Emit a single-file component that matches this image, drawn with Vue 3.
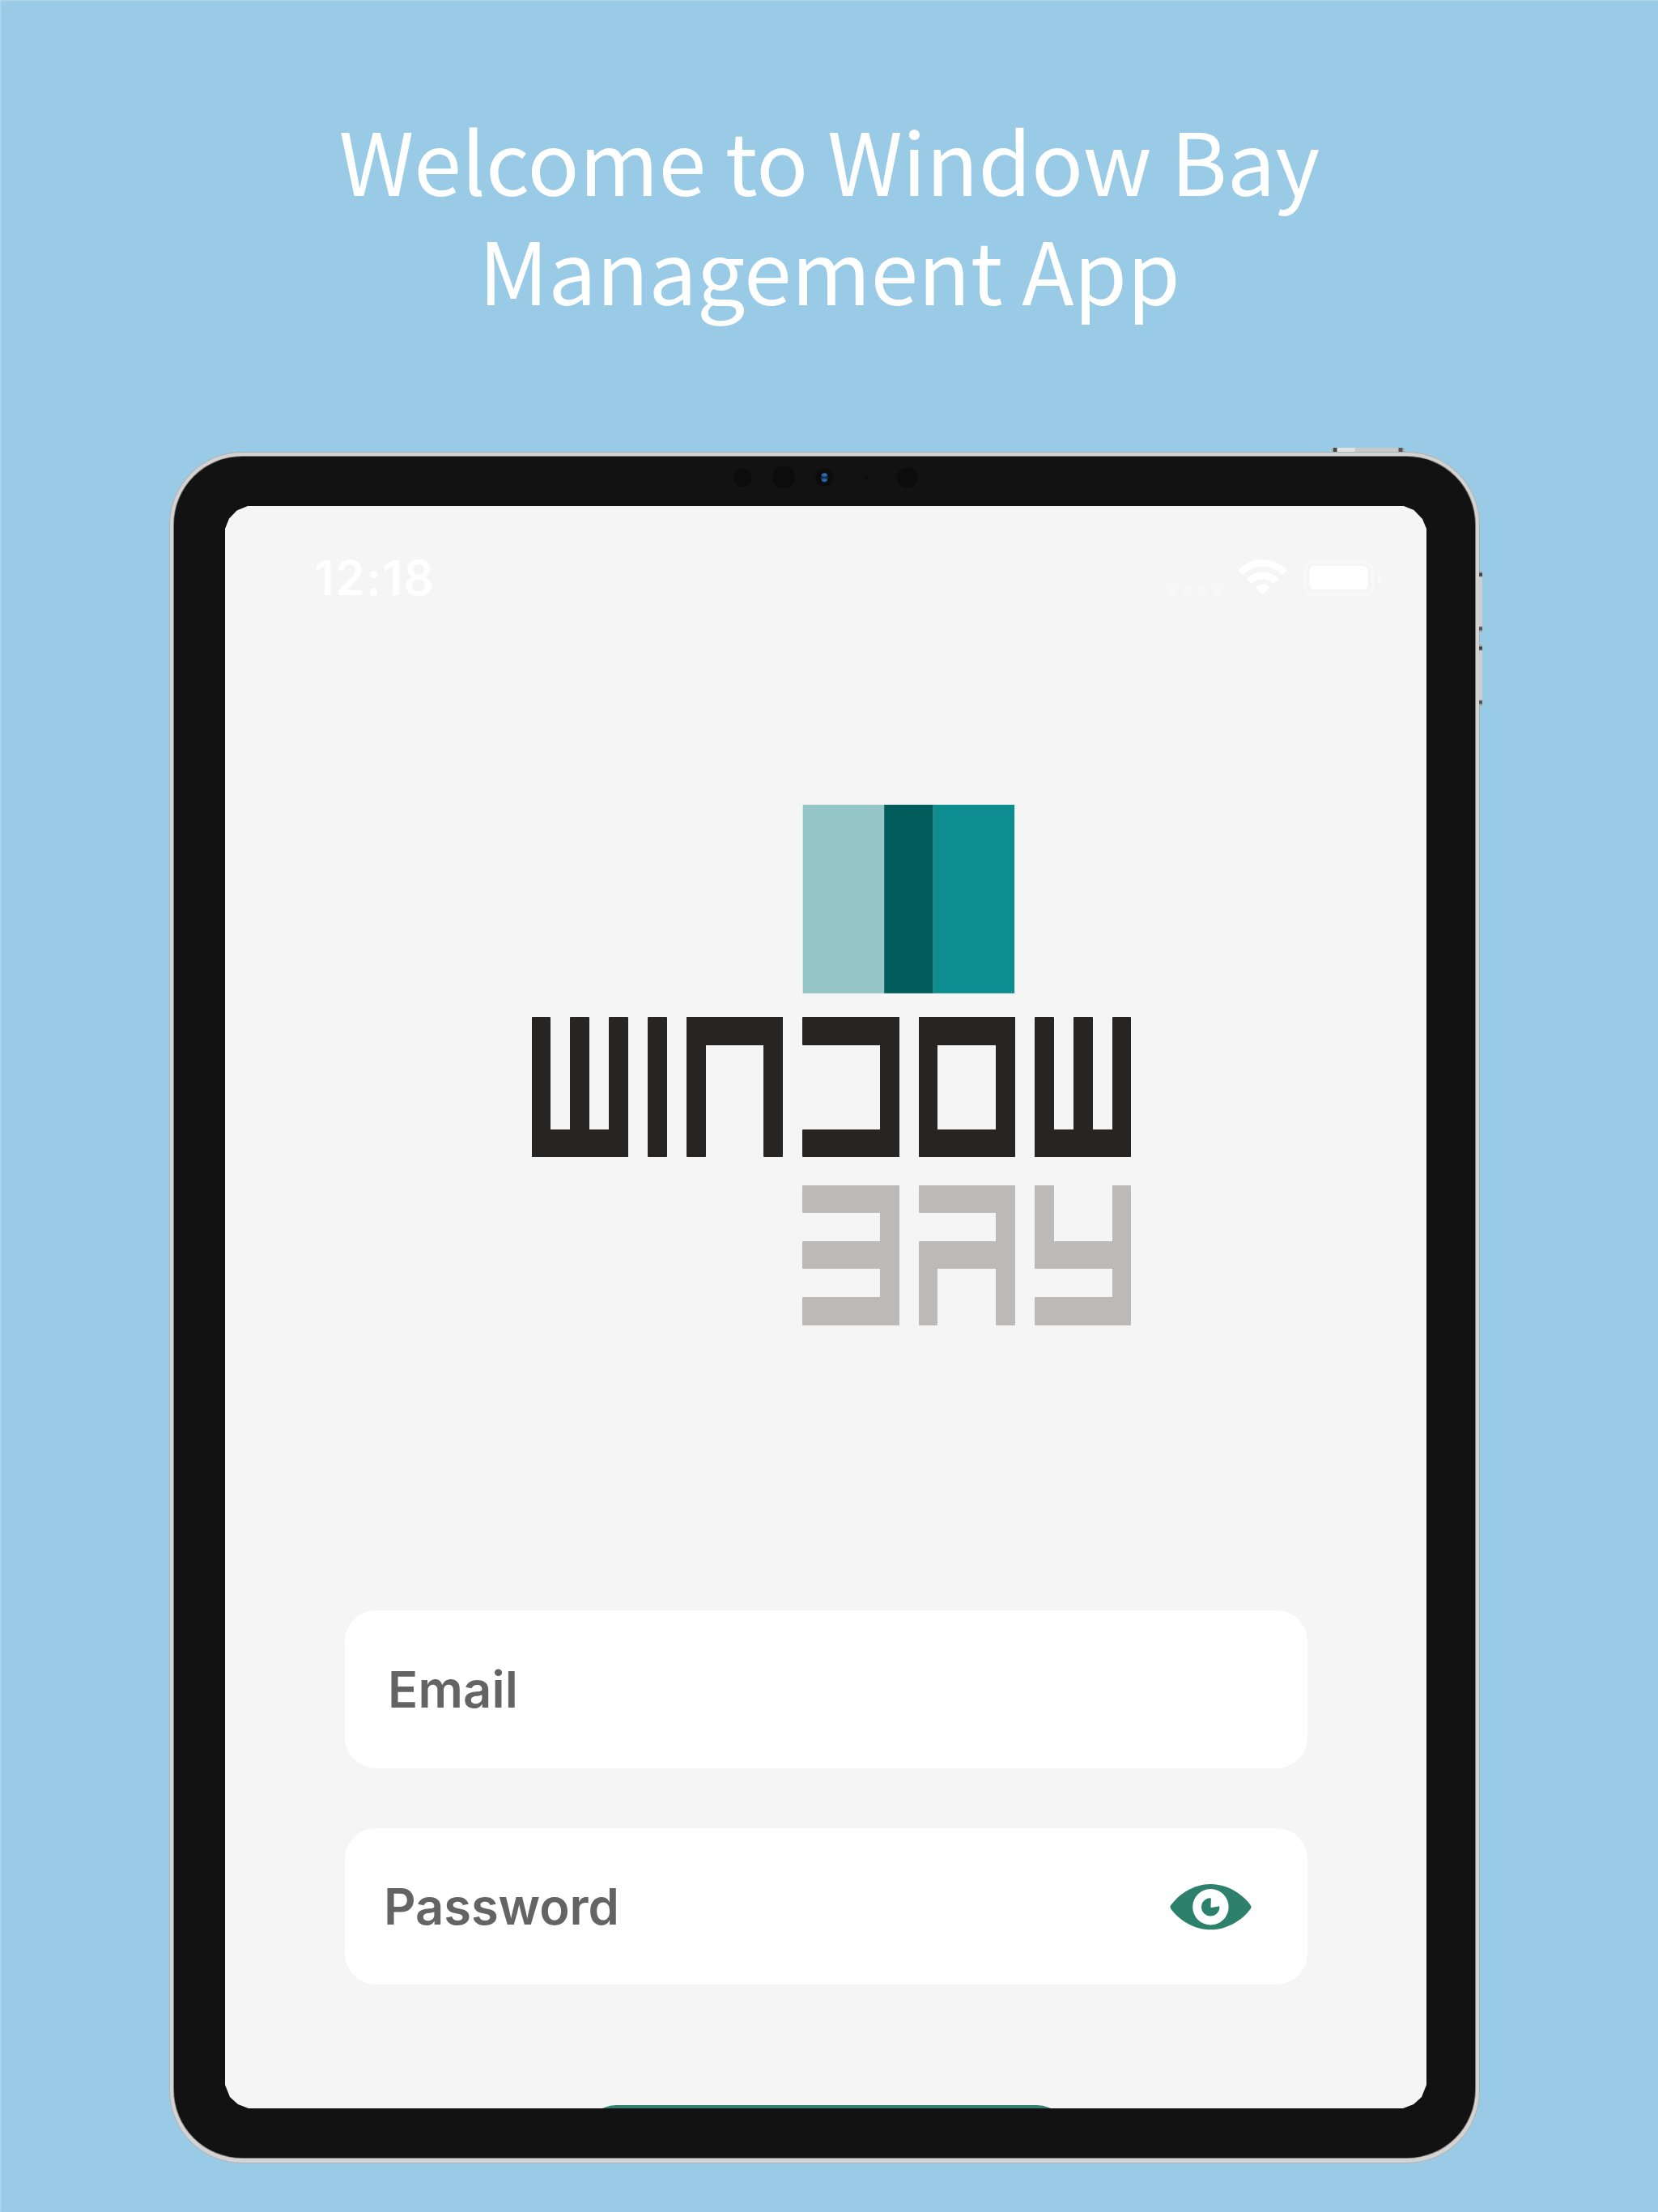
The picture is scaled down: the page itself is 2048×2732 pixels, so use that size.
<script setup>
const sensors = [
  { x: 917.3, y: 590, r: 11 },
  { x: 968, y: 589.3, r: 14 },
  { x: 1018.3, y: 589.7, r: 11 },
  { x: 1070, y: 590, r: 3 },
  { x: 1120.7, y: 589.7, r: 12.7 },
]

// Wordmark bars on a 31 x 5 grid: [column, row, columns, rows]
const windowBars = [
  [0, 0, 1, 5], [2, 0, 1, 5], [4, 0, 1, 5], [0, 4, 5, 1],
  [6, 0, 1, 5],
  [8, 0, 1, 5], [12, 0, 1, 5], [8, 0, 5, 1],
  [14, 0, 5, 1], [14, 4, 5, 1], [18, 0, 1, 5],
  [20, 0, 5, 1], [20, 4, 5, 1], [20, 0, 1, 5], [24, 0, 1, 5],
  [26, 0, 1, 5], [28, 0, 1, 5], [30, 0, 1, 5], [26, 4, 5, 1],
]
const bayBars = [
  [14, 0, 5, 1], [14, 2, 5, 1], [14, 4, 5, 1], [18, 0, 1, 5],
  [20, 0, 5, 1], [20, 2, 5, 1], [20, 2, 1, 3], [24, 0, 1, 5],
  [26, 0, 1, 3], [26, 2, 5, 1], [26, 4, 5, 1], [30, 0, 1, 5],
]
const COL = 23.9
const ROW = 34.55

// Edges are rounded to whole pixels so that overlapping bars share them
const place = (bars, top) =>
  bars.map(([c, r, w, h]) => {
    const x = Math.round(656.5 + c * COL)
    const y = Math.round(top + r * ROW)
    return {
      x,
      y,
      width: Math.round(656.5 + (c + w) * COL) - x,
      height: Math.round(top + (r + h) * ROW) - y,
      rx: 1,
    }
  })
const windowRects = place(windowBars, 1256.3)
const bayRects = place(bayBars, 1463.8)
</script>

<template>
  <main class="page">
    <h1 class="title">Welcome to Window Bay<br />Management App</h1>
    <section class="tablet">
      <span class="key key-top"></span>
      <span class="key key-up"></span>
      <span class="key key-down"></span>
      <div class="bezel">
        <svg class="sensors" width="320" height="40" viewBox="860 570 320 40">
          <circle v-for="s in sensors" :key="s.x" :cx="s.x" :cy="s.y" :r="s.r" fill="#0c0c0c" />
          <ellipse cx="1018.3" cy="589.7" rx="4.5" ry="6" fill="#102f55" />
          <ellipse cx="1018.3" cy="586.6" rx="3.4" ry="2" fill="#2d6cab" />
          <ellipse cx="1018.3" cy="593" rx="3.4" ry="2" fill="#29629e" />
        </svg>
        <div class="screen">
          <header class="status">
            <span class="time">12:18</span>
            <svg width="270" height="50" viewBox="1438 689 270 50">
              <g fill="#f7f7f7">
                <circle cx="1448" cy="728.7" r="6.5" />
                <circle cx="1466.7" cy="728.7" r="6.5" />
                <circle cx="1485.2" cy="728.7" r="6.5" />
                <circle cx="1503.8" cy="728.7" r="6.5" />
              </g>
              <path fill="#fff" d="M1529.8 703.4Q1542.5 691 1559.5 691T1589.2 703.4Q1590 704.2 1589.2 705L1585 709.2Q1584.2 710 1583.3 709.2Q1572.8 700 1559.5 700T1535.7 709.2Q1534.8 710 1534 709.2L1529.8 705Q1529 704.2 1529.8 703.4Z" />
              <path fill="#fff" d="M1540.6 714.2Q1548.7 706.2 1559.5 706.2T1578.4 714.2Q1579.2 715 1578.4 715.8L1574 720.2Q1573.2 721 1572.3 720.2Q1566.7 715.4 1559.5 715.4T1546.7 720.2Q1545.8 721 1545 720.2L1540.6 715.8Q1539.8 715 1540.6 714.2Z" />
              <path fill="#fff" d="M1551.4 725Q1554.9 721.6 1559.5 721.6T1567.6 725Q1568.4 725.8 1567.6 726.6L1560.4 733.8Q1559.5 734.7 1558.6 733.8L1551.4 726.6Q1550.6 725.8 1551.4 725Z" />
              <rect x="1612" y="693.7" width="84" height="40.6" rx="11.5" fill="none" stroke="#f8f8f8" stroke-width="4" />
              <rect x="1617.3" y="698.9" width="72.3" height="29.3" rx="6" fill="#fff" />
              <path d="M1701 706.5Q1706.7 708.5 1706.7 714T1701 721.5Z" fill="#f9f9f9" />
            </svg>
          </header>

          <svg class="logo" width="742" height="646" viewBox="656 992 742 646">
            <rect x="991.7" y="993.9" width="101" height="232.9" fill="#95c6c7" />
            <rect x="1152" y="993.9" width="101.1" height="232.9" fill="#0d8d90" />
            <rect x="1092.2" y="993.9" width="60.6" height="232.9" fill="#015c5c" />
            <rect x="1152.3" y="993.9" width="1" height="232.9" fill="#3f8c8c" />
            <g fill="#262523">
              <rect v-for="(b, i) in windowRects" :key="i" v-bind="b" />
            </g>
            <g fill="#bbbab8">
              <rect v-for="(b, i) in bayRects" :key="i" v-bind="b" />
            </g>
          </svg>

          <div class="form">
            <div class="field email"><span>Email</span></div>
            <div class="field password">
              <span>Password</span>
              <svg width="102" height="58" viewBox="1445 2325 102 58">
                <path fill="#2c806c" d="M1446.2 2352.2C1456 2338.5 1474.5 2326 1495.5 2326S1535 2338.5 1544.8 2352.2Q1546.2 2354.3 1544.8 2356.4C1535 2370 1516.5 2382.3 1495.5 2382.3S1456 2370 1446.2 2356.4Q1444.8 2354.3 1446.2 2352.2Z" />
                <circle cx="1495.4" cy="2354.3" r="22.2" fill="#fff" />
                <path fill="#2c806c" d="M1495.9 2344Q1495.9 2343 1494.5 2343.2A11.2 11.2 0 1 0 1506.4 2354.5Q1506.4 2353.2 1505.2 2353.4L1496.5 2355Q1495.4 2355.2 1495.5 2354Z" />
              </svg>
            </div>
            <div class="submit"></div>
          </div>
        </div>
      </div>
    </section>
  </main>
</template>

<style>
body {
  margin: 0;
  background: #99cae6;
}
</style>

<style scoped>
.page {
  width: 2048px;
  height: 2732px;
  overflow: hidden;
  background: #99cae6;
  box-shadow: inset 1px 1px 2px rgba(255, 255, 255, 0.3);
}
.title {
  margin: 0;
  padding: 128px 0 160px 1px;
  text-align: center;
  color: #fff;
  font: 400 105.8px/135px "Noto Sans CJK SC", "Noto Sans", sans-serif;
}
.tablet {
  position: relative;
  box-sizing: border-box;
  width: 1619px;
  height: 2114px;
  margin-left: 209px;
  padding: 6px 6px 7px;
  border-radius: 90px;
  background: #d3d3d3;
  box-shadow: inset 0 0 0 1px #a9b2b7;
}
.bezel {
  position: relative;
  box-sizing: border-box;
  height: 100%;
  padding: 61px 60px 61px 63px;
  border-radius: 84px;
  background: #121212;
  box-shadow: 0 0 0 1px #7c7a7a;
}
.sensors {
  position: absolute;
  left: 645px;
  top: 6px;
}
.key {
  position: absolute;
  background: #c9c9cb;
}
.key-top {
  left: 1436px;
  top: -5px;
  width: 90px;
  height: 5px;
  border-radius: 2px 2px 0 0;
  background: linear-gradient(90deg, #aaa 2px, #444 2px 6px, #e2e2e2 7px 28px, #c8c8c8 29px 82px, #555 83px 87px, #aaa 88px);
}
.key-up,
.key-down {
  left: 1618px;
  width: 4px;
  height: 76px;
  border-radius: 0 2px 2px 0;
  background: linear-gradient(#aaa 2px, #444 3px 6px, #cfcfd1 8px 68px, #555 70px 73px, #aaa 74px);
}
.key-up {
  top: 147px;
}
.key-down {
  top: 238px;
}
.screen {
  height: 100%;
  overflow: hidden;
  background: #f5f5f5;
  clip-path: polygon(0 28px, 5px 15.5px, 14.5px 5.5px, 28px 0, calc(100% - 28px) 0, calc(100% - 15.5px) 5px, calc(100% - 5px) 16px, 100% 28px, 100% calc(100% - 29px), calc(100% - 6px) calc(100% - 14px), calc(100% - 16px) calc(100% - 5px), calc(100% - 29px) 100%, 29px 100%, 16px calc(100% - 5px), 6px calc(100% - 14px), 0 calc(100% - 29px));
  font-family: Inter, "Liberation Sans", sans-serif;
}
.status {
  display: flex;
  align-items: center;
  justify-content: space-between;
  height: 177px;
  padding: 0 54px 0 110px;
}
.time {
  color: #fff;
  font-size: 58.7px;
  font-weight: 600;
  letter-spacing: 1.4px;
}
.logo {
  display: block;
  margin: 190px 0 0 378px;
}
.form {
  width: 1189px;
  margin: 351px 0 0 148px;
}
.field {
  box-sizing: border-box;
  display: flex;
  align-items: center;
  justify-content: space-between;
  border-radius: 38px;
  background: #fff;
  color: #646464;
  font-size: 61.5px;
  font-weight: 600;
}
.email {
  height: 195px;
  padding-left: 53px;
  letter-spacing: 0.2px;
}
.password {
  height: 193px;
  margin-top: 74px;
  padding: 0 68.5px 0 48px;
  letter-spacing: -0.1px;
}
.submit {
  width: 596px;
  height: 150px;
  margin: 149px auto 0;
  border-radius: 38px;
  background: #347f6c;
}
</style>
